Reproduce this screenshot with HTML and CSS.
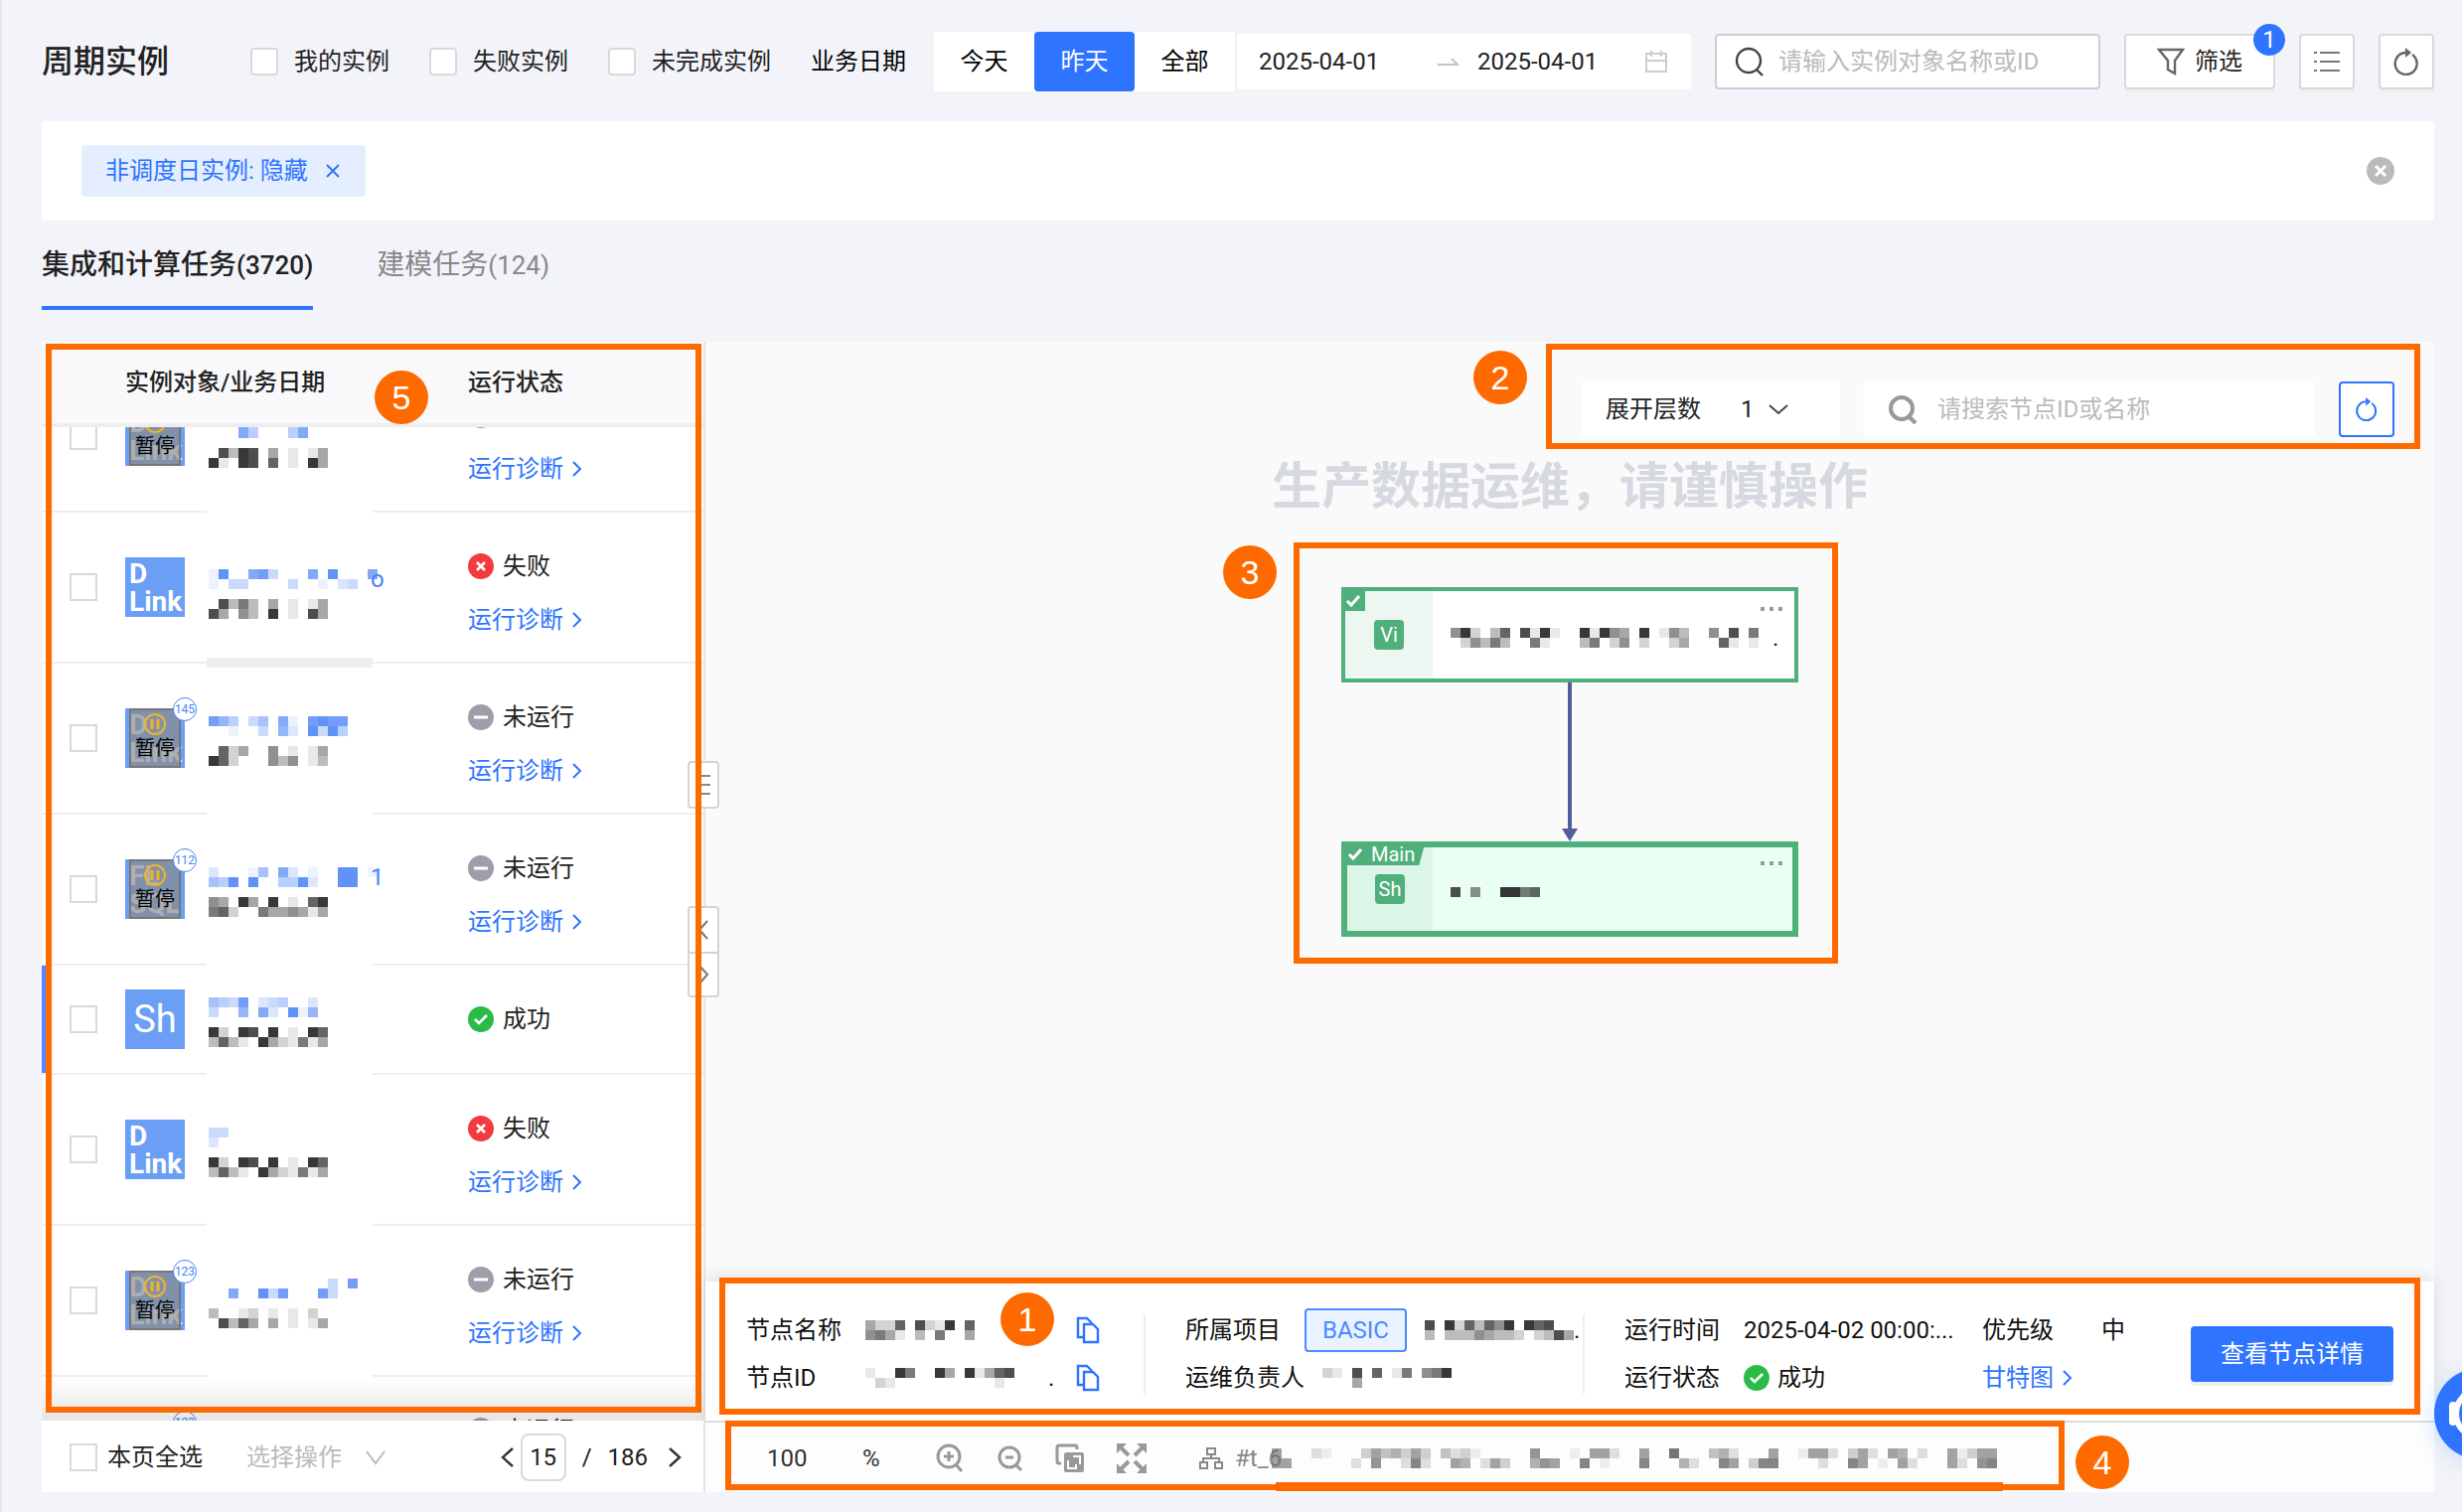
FILE: index.html
```html
<!DOCTYPE html>
<html lang="zh">
<head>
    <meta charset="UTF-8">
    <meta name="viewport" content="width=device-width, initial-scale=1.0">
    <title>周期实例</title>
    <link rel="stylesheet" href="styles.css">
</head>
<body>
    <!-- Shared icons -->
    <svg class="sprite" aria-hidden="true">
        <symbol id="i-fail" viewBox="0 0 26 26"><circle cx="13" cy="13" r="13" fill="#f33b3f"/><path d="M9 9l8 8M17 9l-8 8" stroke="#fff" stroke-width="2.6"/></symbol>
        <symbol id="i-wait" viewBox="0 0 26 26"><circle cx="13" cy="13" r="13" fill="#a19caa"/><path d="M6 13h14" stroke="#fff" stroke-width="3"/></symbol>
        <symbol id="i-ok" viewBox="0 0 26 26"><circle cx="13" cy="13" r="13" fill="#2cbb47"/><path d="M7 13l4 4 8-8" fill="none" stroke="#fff" stroke-width="2.6"/></symbol>
        <symbol id="i-right" viewBox="0 0 10 18"><path d="M1 2l7 7-7 7" fill="none" stroke="currentColor" stroke-width="2"/></symbol>
        <symbol id="i-refresh" viewBox="0 0 28 28"><path d="M20 6A11 11 0 1 1 13 4" transform="translate(0 1)" fill="none" stroke="currentColor" stroke-width="2.4"/><path d="M13 0l6 5-6 5z" fill="currentColor"/></symbol>
        <symbol id="i-copy" viewBox="0 0 24 28"><path d="M7 21H2V2h9l5 5" fill="none" stroke="currentColor" stroke-width="2.4"/><path d="M8 8h9l5 5v13H8z" fill="none" stroke="currentColor" stroke-width="2.4"/></symbol>
        <symbol id="i-pause" viewBox="0 0 24 24"><circle cx="12" cy="12" r="10" fill="none" stroke="#f0b429" stroke-width="2"/><path d="M9 7v10M15 7v10" stroke="#f0b429" stroke-width="3"/></symbol>
        <symbol id="i-check" viewBox="0 0 16 14"><path d="M2 7l4 4 8-9" fill="none" stroke="#fff" stroke-width="3"/></symbol>
        <symbol id="i-more" viewBox="0 0 22 4"><path d="M0 0h4v4H0zM9 0h4v4H9zM18 0h4v4h-4z" fill="#999"/></symbol>
    </svg>

    <header class="topbar">
        <h1>周期实例</h1>
        <div class="checks">
            <label><input type="checkbox">我的实例</label>
            <label><input type="checkbox">失败实例</label>
            <label><input type="checkbox">未完成实例</label>
            <span class="date-label">业务日期</span>
        </div>
        <div class="segment">
            <button>今天</button>
            <button class="on">昨天</button>
            <button>全部</button>
        </div>
        <div class="range">
            <input type="text" value="2025-04-01" aria-label="开始日期">
            <svg width="22" height="10" viewBox="0 0 22 10"><path d="M0 8h20l-6-6" fill="none" stroke="#c4c4c4" stroke-width="2"/></svg>
            <input type="text" value="2025-04-01" aria-label="结束日期">
            <svg width="24" height="24" viewBox="0 0 24 24" fill="none" stroke="#ccc" stroke-width="2"><path d="M2 4h20v18H2zM2 11h20M7 1v6M17 1v6"/></svg>
        </div>
        <div class="search">
            <svg width="30" height="30" viewBox="0 0 30 30" fill="none" stroke="#444" stroke-width="2.4"><circle cx="14" cy="14" r="12"/><path d="M22 23l6 6"/></svg>
            <input type="text" placeholder="请输入实例对象名称或ID" aria-label="搜索实例">
        </div>
        <button class="btn filter">
            <svg width="28" height="28" viewBox="0 0 28 28" fill="none" stroke="#666" stroke-width="2.4"><path d="M2 2h24l-8 11v13l-7-4v-9z"/></svg>
            筛选<span class="count">1</span>
        </button>
        <button class="btn icon" aria-label="列表">
            <svg width="26" height="22" viewBox="0 0 26 22" stroke="#777" stroke-width="2"><path d="M6 2h20M6 11h20M6 20h20M0 2h3M0 11h3M0 20h3"/></svg>
        </button>
        <button class="btn icon" aria-label="刷新"><svg width="28" height="28"><use href="#i-refresh"/></svg></button>
    </header>

    <section class="conditions">
        <span class="tag">非调度日实例: 隐藏
            <svg width="14" height="16" viewBox="0 0 14 16" stroke="currentColor" stroke-width="2"><path d="M1 2l12 12M13 2L1 14"/></svg>
        </span>
        <svg width="28" height="28" viewBox="0 0 28 28"><circle cx="14" cy="14" r="14" fill="#bbb"/><path d="M9 9l10 10M19 9L9 19" stroke="#fff" stroke-width="3"/></svg>
    </section>

    <nav class="tabs">
        <a href="#" class="on">集成和计算任务<span>(3720)</span></a>
        <a href="#">建模任务<span>(124)</span></a>
    </nav>

    <main class="workspace">
        <aside class="instances">
            <div class="list">
                <table>
                    <colgroup>
                        <col class="c-check">
                        <col class="c-type">
                        <col class="c-name">
                        <col>
                    </colgroup>
                    <thead>
                        <tr><th></th><th colspan="2">实例对象/业务日期</th><th class="status">运行状态</th></tr>
                    </thead>
                    <tbody>
                        <tr class="cut">
                            <td><div class="cell check"><input type="checkbox" aria-label="选择"></div></td>
                            <td><div class="cell"><div class="type two">D<br>Link<span class="pause"><svg width="24" height="24"><use href="#i-pause"/></svg>暂停</span></div></div></td>
                            <td class="name"><div class="cell"><i class="mosaic blue" data-rows="...74...47|...74...47"></i><i class="mosaic" data-rows=".8398.4.1.14|91.98.7.1.94"></i></div></td>
                            <td class="status"><div class="cell"><span><svg width="26" height="26"><use href="#i-wait"/></svg>未运行</span><a href="#">运行诊断<svg width="10" height="18"><use href="#i-right"/></svg></a></div></td>
                        </tr>
                        <tr class="smudged">
                            <td><div class="cell check"><input type="checkbox" aria-label="选择"></div></td>
                            <td><div class="cell"><div class="type two">D<br>Link</div></div></td>
                            <td class="name"><div class="cell"><span class="tail"><i class="mosaic blue" data-rows="19..783...7.9...7|1.33....3..1.23"></i>o</span><i class="mosaic" data-rows=".8363.4.1.14|84.53.9.1.84"></i></div></td>
                            <td class="status"><div class="cell"><span><svg width="26" height="26"><use href="#i-fail"/></svg>失败</span><a href="#">运行诊断<svg width="10" height="18"><use href="#i-right"/></svg></a></div></td>
                        </tr>
                        <tr>
                            <td><div class="cell check"><input type="checkbox" aria-label="选择"></div></td>
                            <td><div class="cell"><div class="type two">D<br>Link<span class="pause"><svg width="24" height="24"><use href="#i-pause"/></svg>暂停</span><b class="num">145</b></div></div></td>
                            <td class="name"><div class="cell"><i class="mosaic blue" data-rows="864.35.71.8988|..1..3.62.9394"></i><i class="mosaic" data-rows=".724..5.1.14|972...535.13"></i></div></td>
                            <td class="status"><div class="cell"><span><svg width="26" height="26"><use href="#i-wait"/></svg>未运行</span><a href="#">运行诊断<svg width="10" height="18"><use href="#i-right"/></svg></a></div></td>
                        </tr>
                        <tr>
                            <td><div class="cell check"><input type="checkbox" aria-label="选择"></div></td>
                            <td><div class="cell"><div class="type two">FL<br>SQL<span class="pause"><svg width="24" height="24"><use href="#i-pause"/></svg>暂停</span><b class="num">112</b></div></div></td>
                            <td class="name"><div class="cell"><span class="tail"><i class="mosaic blue" data-rows="2...15.72.1..99.1|549.9..4492..99"></i>1</span><i class="mosaic" data-rows="54.94.9.1.79|672..6445414"></i></div></td>
                            <td class="status"><div class="cell"><span><svg width="26" height="26"><use href="#i-wait"/></svg>未运行</span><a href="#">运行诊断<svg width="10" height="18"><use href="#i-right"/></svg></a></div></td>
                        </tr>
                        <tr class="short">
                            <td><div class="cell check"><input type="checkbox" aria-label="选择"></div></td>
                            <td><div class="cell"><div class="type">Sh</div></div></td>
                            <td class="name"><div class="cell"><i class="mosaic blue" data-rows="5438.234..2|3..6.72.916"></i><i class="mosaic" data-rows="92.98.9.1.97|3731.9421614"></i></div></td>
                            <td class="status"><div class="cell"><span><svg width="26" height="26"><use href="#i-ok"/></svg>成功</span></div></td>
                        </tr>
                        <tr>
                            <td><div class="cell check"><input type="checkbox" aria-label="选择"></div></td>
                            <td><div class="cell"><div class="type two">D<br>Link</div></div></td>
                            <td class="name"><div class="cell"><i class="mosaic blue" data-rows="33|2"></i><i class="mosaic" data-rows="92.98.9.1.97|3731.9421614"></i></div></td>
                            <td class="status"><div class="cell"><span><svg width="26" height="26"><use href="#i-fail"/></svg>失败</span><a href="#">运行诊断<svg width="10" height="18"><use href="#i-right"/></svg></a></div></td>
                        </tr>
                        <tr>
                            <td><div class="cell check"><input type="checkbox" aria-label="选择"></div></td>
                            <td><div class="cell"><div class="type two">D<br>Link<span class="pause"><svg width="24" height="24"><use href="#i-pause"/></svg>暂停</span><b class="num">123</b></div></div></td>
                            <td class="name"><div class="cell"><i class="mosaic blue" data-rows="............3.8|..7..938...83"></i><i class="mosaic" data-rows="3..12.1.1.2|.8374.4.1.14"></i></div></td>
                            <td class="status"><div class="cell"><span><svg width="26" height="26"><use href="#i-wait"/></svg>未运行</span><a href="#">运行诊断<svg width="10" height="18"><use href="#i-right"/></svg></a></div></td>
                        </tr>
                        <tr>
                            <td><div class="cell check"><input type="checkbox" aria-label="选择"></div></td>
                            <td><div class="cell"><div class="type two">D<br>Link<span class="pause"><svg width="24" height="24"><use href="#i-pause"/></svg>暂停</span><b class="num">123</b></div></div></td>
                            <td class="name"></td>
                            <td class="status"><div class="cell"><span><svg width="26" height="26"><use href="#i-wait"/></svg>未运行</span><a href="#">运行诊断<svg width="10" height="18"><use href="#i-right"/></svg></a></div></td>
                        </tr>
                    </tbody>
                </table>
                <div class="fade"></div>
            </div>
            <footer class="pager">
                <label><input type="checkbox">本页全选</label>
                <button class="ops" disabled>选择操作<svg width="20" height="16" viewBox="0 0 20 16" fill="none" stroke="#bbb" stroke-width="2"><path d="M1 2l9 12 9-12"/></svg></button>
                <div class="pages">
                    <button aria-label="上一页"><svg width="14" height="22" viewBox="0 0 14 22" fill="none" stroke="#333" stroke-width="2.4"><path d="M12 2L2 11l10 9"/></svg></button>
                    <input type="text" value="15" aria-label="页码">
                    <span>/</span>
                    <span>186</span>
                    <button aria-label="下一页"><svg width="14" height="22" viewBox="0 0 14 22" fill="none" stroke="#333" stroke-width="2.4"><path d="M2 2l10 9-10 9"/></svg></button>
                </div>
            </footer>
            <button class="handle menu" aria-label="菜单"><svg width="14" height="20" viewBox="0 0 14 20" stroke="#888" stroke-width="2"><path d="M0 1h14M0 10h14M0 19h14"/></svg></button>
            <div class="handle pair">
                <button aria-label="收起"><svg width="12" height="20" viewBox="0 0 12 20" fill="none" stroke="#777" stroke-width="2"><path d="M10 1L2 10l8 9"/></svg></button>
                <button aria-label="展开"><svg width="12" height="20" viewBox="0 0 12 20" fill="none" stroke="#777" stroke-width="2"><path d="M2 1l8 9-8 9"/></svg></button>
            </div>
            <div class="mark mark-list"></div>
            <span class="dot dot-list">5</span>
        </aside>

        <section class="canvas">
            <div class="tools">
                <label class="depth">展开层数
                    <select><option>1</option></select>
                    <svg width="20" height="12" viewBox="0 0 20 12" fill="none" stroke="#444" stroke-width="2"><path d="M1 2l9 8 9-8"/></svg>
                </label>
                <div class="find">
                    <svg width="30" height="30" viewBox="0 0 30 30" fill="none" stroke="#999" stroke-width="4"><circle cx="14" cy="14" r="11"/><path d="M21 22l7 7"/></svg>
                    <input type="text" placeholder="请搜索节点ID或名称" aria-label="搜索节点">
                </div>
                <button class="reload" aria-label="刷新"><svg width="24" height="24"><use href="#i-refresh"/></svg></button>
                <div class="mark mark-tools"></div>
                <span class="dot dot-tools">2</span>
            </div>

            <p class="watermark">生产数据运维，请谨慎操作</p>

            <div class="flow">
                <div class="node">
                    <span class="flag"><svg width="16" height="14"><use href="#i-check"/></svg></span>
                    <div class="kind"><b>Vi</b></div>
                    <div class="title"><i class="mosaic" data-rows="592.37.8191..91954.9.153..5.8.6|.25363..61...36.25.2..24...71.1"></i>.</div>
                    <svg class="more" width="22" height="4"><use href="#i-more"/></svg>
                </div>
                <svg class="arrow" width="16" height="160" viewBox="0 0 16 160"><path d="M8 0v150" stroke="#51609c" stroke-width="4"/><path d="M0 147h16l-8 13z" fill="#51609c"/></svg>
                <div class="node main">
                    <span class="flag"><svg width="16" height="14"><use href="#i-check"/></svg>Main</span>
                    <div class="kind"><b>Sh</b></div>
                    <div class="title"><i class="mosaic" data-rows="8.5..9967"></i></div>
                    <svg class="more" width="22" height="4"><use href="#i-more"/></svg>
                </div>
                <div class="mark mark-flow"></div>
                <span class="dot dot-flow">3</span>
            </div>

            <div class="info">
                <div class="group">
                    <div class="row"><span class="key">节点名称</span><i class="mosaic" data-rows="4227.8219.7|5641.3.6..4"></i><button class="copy" aria-label="复制名称"><svg width="24" height="28"><use href="#i-copy"/></svg></button></div>
                    <div class="row"><span class="key">节点ID</span><i class="mosaic" data-rows="1..96..94.91478|.21..........1"></i><span class="end">.</span><button class="copy" aria-label="复制ID"><svg width="24" height="28"><use href="#i-copy"/></svg></button></div>
                </div>
                <div class="group">
                    <div class="row"><span class="key">所属项目</span><span class="basic">BASIC</span><i class="mosaic" data-rows="8.9273759.978|3.33354332.2384"></i>.</div>
                    <div class="row"><span class="key wide">运维负责人</span><i class="mosaic" data-rows="21.8.7.16.569|...4"></i></div>
                </div>
                <div class="group">
                    <div class="row"><span class="key">运行时间</span><span class="val">2025-04-02 00:00:...</span><span class="key">优先级</span><span>中</span></div>
                    <div class="row"><span class="key">运行状态</span><span class="val ok"><svg width="26" height="26"><use href="#i-ok"/></svg>成功</span><a href="#">甘特图<svg width="10" height="18"><use href="#i-right"/></svg></a></div>
                </div>
                <button class="primary">查看节点详情</button>
                <div class="mark mark-info"></div>
                <span class="dot dot-info">1</span>
            </div>

            <div class="zoombar">
                <span class="pct"><input type="text" value="100" aria-label="缩放比例">%</span>
                <div class="zooms">
                    <svg width="28" height="30" viewBox="0 0 28 30" fill="none" stroke="#999" stroke-width="3"><circle cx="13" cy="13" r="11"/><path d="M20 21l6 7M13 8v10M8 13h10"/></svg>
                    <svg width="28" height="30" viewBox="0 0 28 30" fill="none" stroke="#999" stroke-width="3"><circle cx="14" cy="14" r="10"/><path d="M20 21l6 6M10 14h8"/></svg>
                    <svg width="30" height="30" viewBox="0 0 30 30"><path d="M6 20H4q-2 0-2-2V4q0-2 2-2h16q2 0 2 2v2" fill="none" stroke="#999" stroke-width="3"/><rect x="9" y="9" width="20" height="20" rx="2" fill="#999"/><path d="M13 17v8h8v-4M18 13h7v8" fill="none" stroke="#fff" stroke-width="2"/></svg>
                    <svg width="30" height="30" viewBox="0 0 30 30"><path d="M3 3l9 9M27 3l-9 9M3 27l9-9M27 27l-9-9" stroke="#999" stroke-width="4"/><path d="M0 0h10L0 10zM30 0H20l10 10zM0 30h10L0 20zM30 30H20l10-10z" fill="#999"/></svg>
                </div>
                <svg width="24" height="22" viewBox="0 0 24 22" fill="none" stroke="#888" stroke-width="2"><path d="M8 1h8v6H8zM1 15h7v6H1zM16 15h7v6h-7zM12 7v4M4 15v-4h16v4"/></svg>
                <span class="task">#t_6</span>
                <i class="mosaic gray" data-rows="6...21...3645363.4231.....7...1.662..6..9...452...6..1662.362.65.2..61366|66......2.7..282..65.263..576..8.1...8...52..86.388....2..86.1.62...62.78"></i>
                <div class="mark mark-zoom"></div>
                <span class="dot dot-zoom">4</span>
            </div>
        </section>
    </main>

    <button class="chat" aria-label="客服">
        <svg width="92" height="92" viewBox="0 0 92 92" fill="none" stroke="#fff"><circle cx="46" cy="46" r="24" stroke-width="6"/><path d="M19 38v16" stroke-width="8" stroke-linecap="round"/></svg>
    </button>

    <script src="script.js"></script>
</body>
</html>
```
FILE: styles.css
```css
* {
    margin: 0;
    padding: 0;
    box-sizing: border-box;
}

body {
    display: flex;
    flex-direction: column;
    min-height: 100vh;
    padding: 32px 28px 20px 40px;
    border-left: 2px solid #e6e7ea;
    background-color: #f3f4f9;
    font-family: Roboto, "Noto Sans CJK SC", sans-serif;
    font-size: 24px;
    line-height: 36px;
    color: #222;
    overflow: hidden;
    position: relative;
}

button, input, select {
    font: inherit;
    color: inherit;
    border: none;
    background: none;
    outline: none;
}

button {
    cursor: pointer;
}

a {
    color: #2e74ff;
    text-decoration: none;
}

svg {
    flex-shrink: 0;
}

input::placeholder {
    color: #bbb;
    opacity: 1;
}

input[type="checkbox"] {
    appearance: none;
    flex-shrink: 0;
    width: 28px;
    height: 28px;
    border: 2px solid #d9d9d9;
    background-color: #fff;
}

.sprite {
    position: absolute;
    width: 0;
    height: 0;
}

/* 顶部栏 */
.topbar {
    display: flex;
    align-items: center;
    height: 60px;
    white-space: nowrap;
}

.topbar h1 {
    font-size: 32px;
    font-weight: 500;
    margin-right: 82px;
}

.checks {
    display: flex;
    gap: 40px;
    margin-right: 28px;
}

.checks label {
    display: flex;
    align-items: center;
    gap: 16px;
}

.checks input[type="checkbox"] {
    border-radius: 4px;
}

.date-label {
    color: #000;
}

.segment {
    display: flex;
    background-color: #fff;
    color: #000;
}

.segment button {
    width: 101px;
    height: 60px;
}

.segment .on {
    background-color: #2e74ff;
    color: #fff;
    border-radius: 4px;
}

.range {
    display: flex;
    align-items: center;
    width: 459px;
    height: 56px;
    margin-right: 24px;
    padding: 0 24px 0 22px;
    border-left: 2px solid #f0f0f3;
    background-color: #fff;
}

.range input {
    width: 180px;
}

.range input + svg {
    margin-right: 18px;
}

.range input:last-of-type {
    width: 168px;
}

.range svg:last-child {
    margin: 0;
}

.search {
    display: flex;
    align-items: center;
    gap: 14px;
    flex: 1;
    height: 56px;
    margin-right: 24px;
    padding: 0 18px;
    border: 2px solid #cdced3;
    border-radius: 4px;
    background-color: #fff;
}

.search input {
    width: 100%;
}

.btn {
    position: relative;
    display: flex;
    align-items: center;
    justify-content: center;
    height: 56px;
    border: 2px solid #d9d9dc;
    border-radius: 4px;
    background-color: #fff;
    box-shadow: 0 4px 0 #eeeff3;
    color: #666;
}

.filter {
    width: 152px;
    gap: 10px;
    padding-left: 10px;
    color: #222;
}

.icon {
    width: 56px;
    margin-left: 24px;
}

.count {
    position: absolute;
    top: -12px;
    right: -12px;
    width: 32px;
    height: 32px;
    border-radius: 50%;
    background-color: #2e74ff;
    color: #fff;
    line-height: 32px;
}

/* 筛选条件 */
.conditions {
    display: flex;
    align-items: center;
    justify-content: space-between;
    height: 100px;
    margin-top: 30px;
    padding: 0 40px;
    border-radius: 4px;
    background-color: #fff;
}

.tag {
    display: flex;
    align-items: center;
    gap: 18px;
    height: 52px;
    padding: 0 26px 0 24px;
    border-radius: 4px;
    background-color: #e5eeff;
    color: #2e74ff;
}

.tabs {
    display: flex;
    gap: 64px;
    margin-bottom: 32px;
    font-size: 28px;
    line-height: 90px;
}

.tabs a {
    color: #888;
}

.tabs span {
    font-size: 26px;
}

.tabs .on {
    color: #222;
    font-weight: 500;
    box-shadow: inset 0 -4px 0 #2e74ff;
}

/* 工作区 */
.workspace {
    display: flex;
    flex: 1;
}

.instances {
    position: relative;
    z-index: 2;
    display: flex;
    flex-direction: column;
    flex-shrink: 0;
    width: 668px;
    border-right: 2px solid #e4e4e6;
    background-color: #fff;
}

.list {
    position: relative;
    z-index: 0;
    flex: 1 1 0;
    overflow: hidden;
}

.list table {
    width: 100%;
    table-layout: fixed;
    border-collapse: separate;
    border-spacing: 0;
}

.c-check {
    width: 84px;
}

.c-type {
    width: 82px;
}

.c-name {
    width: 167px;
}

th {
    position: relative;
    z-index: 1;
    height: 86px;
    border-bottom: 4px solid #eee;
    background-color: #f9f9fb;
    font-weight: 500;
    text-align: left;
}

td {
    border-bottom: 2px solid #eee;
}

td.name {
    border-bottom-color: #fff;
    padding-left: 2px;
}

.status {
    padding-left: 96px;
}

.cell {
    display: flex;
    flex-direction: column;
    justify-content: center;
    gap: 10px;
    height: 150px;
}

.check {
    padding-left: 28px;
}

.name .cell {
    padding-top: 6px;
}

.cut .name .cell,
.smudged .name .cell {
    padding-top: 14px;
}

.status .cell {
    gap: 18px;
    padding-top: 12px;
}

.cut .cell {
    margin-top: -66px;
}

.short .cell {
    height: 108px;
}

.short .status .cell {
    padding-top: 0;
}

.short td:first-child {
    box-shadow: inset 4px 0 0 #5585ff;
}

.smudged .name {
    box-shadow: inset 0 -4px 0 #eee, 0 4px 0 #eee;
    border-bottom-color: #eee;
}

.status span,
.status a,
.row a {
    display: flex;
    align-items: center;
    gap: 9px;
}

.type {
    position: relative;
    width: 60px;
    height: 60px;
    background-color: #6a9ff5;
    color: #fff;
    font-size: 38px;
    line-height: 60px;
    text-align: center;
}

.type.two {
    padding: 3px 4px;
    font-size: 28px;
    font-weight: 700;
    line-height: 28px;
    text-align: left;
}

.pause {
    position: absolute;
    inset: 0 4px;
    display: flex;
    flex-direction: column;
    align-items: center;
    padding-top: 2px;
    border: 2px solid #777;
    background-color: rgba(140, 140, 140, .7);
    color: #000;
    font-size: 20px;
    font-weight: 400;
    line-height: 24px;
}

.num {
    position: absolute;
    top: -11px;
    right: -12px;
    width: 24px;
    height: 24px;
    border: 1px solid #4886f5;
    border-radius: 50%;
    background-color: #fff;
    color: #4886f5;
    font-size: 12px;
    font-weight: 400;
    line-height: 22px;
    text-align: center;
}

/* 打码块 */
.mosaic {
    display: block;
    flex-shrink: 0;
    color: #222;
}

.mosaic svg {
    display: block;
}

.mosaic.blue {
    color: #4f86f7;
}

.mosaic.gray {
    color: #666;
}

.tail {
    display: flex;
    height: 20px;
    line-height: 20px;
    color: #4886f5;
}

.tail .mosaic {
    width: 163px;
}

.fade {
    position: absolute;
    left: 0;
    right: 0;
    bottom: 0;
    height: 44px;
    background: linear-gradient(rgba(0, 0, 0, 0), rgba(0, 0, 0, .1));
}

.pager {
    display: flex;
    align-items: center;
    height: 72px;
    padding: 2px 22px 0 28px;
    white-space: nowrap;
}

.pager label {
    display: flex;
    align-items: center;
    gap: 10px;
}

.ops {
    display: flex;
    align-items: center;
    gap: 24px;
    margin-left: 44px;
    color: #bbb;
}

.pages {
    display: flex;
    align-items: center;
    gap: 16px;
    margin-left: auto;
}

.pages button {
    display: flex;
}

.pages button:first-child {
    margin-right: -10px;
}

.pages input {
    width: 46px;
    height: 48px;
    border: 2px solid #d9d9d9;
    border-radius: 8px;
    text-align: center;
}

.pages button:last-child {
    margin-left: 4px;
}

.handle {
    position: absolute;
    right: -16px;
    width: 32px;
    border: 2px solid #d4d4d4;
    border-radius: 4px;
    background-color: #fff;
}

.menu {
    top: 422px;
    height: 48px;
    display: flex;
    align-items: center;
    justify-content: center;
}

.pair {
    top: 568px;
}

.pair button {
    display: flex;
    align-items: center;
    justify-content: center;
    width: 28px;
    height: 44px;
}

.pair button + button {
    border-top: 2px solid #d4d4d4;
}

/* 画布 */
.canvas {
    display: flex;
    flex-direction: column;
    flex: 1;
    min-width: 0;
    background-color: #fafafa;
}

.tools {
    position: relative;
    display: flex;
    gap: 24px;
    align-self: flex-end;
    margin: 40px 40px 0 0;
}

.depth {
    display: flex;
    align-items: center;
    width: 260px;
    height: 56px;
    padding-left: 24px;
    background-color: #fff;
}

.depth select {
    appearance: none;
    width: 28px;
    margin-left: 40px;
}

.find {
    display: flex;
    align-items: center;
    gap: 20px;
    width: 454px;
    padding: 0 24px;
    border-radius: 4px;
    background-color: #fff;
}

.find input {
    width: 100%;
}

.reload {
    display: flex;
    align-items: center;
    justify-content: center;
    width: 56px;
    border: 2px solid #2e74ff;
    border-radius: 4px;
    background-color: #fff;
    color: #2e74ff;
}

.watermark {
    margin-top: 20px;
    color: #d6d9e0;
    font-size: 50px;
    font-weight: 700;
    line-height: 60px;
    text-align: center;
}

.flow {
    position: relative;
    display: flex;
    flex-direction: column;
    align-items: center;
    align-self: center;
    margin: 71px 0 auto;
}

.node {
    position: relative;
    display: flex;
    width: 460px;
    height: 96px;
    border: 4px solid #50b07b;
    background-color: #fff;
}

.kind {
    display: flex;
    align-items: center;
    justify-content: center;
    width: 88px;
    background-color: #edf6f1;
}

.kind b {
    width: 30px;
    height: 30px;
    border-radius: 4px;
    background-color: #50b07b;
    color: #fff;
    font-size: 20px;
    font-weight: 400;
    line-height: 30px;
    text-align: center;
}

.title {
    display: flex;
    align-items: center;
    padding: 6px 0 0 18px;
}

.title .mosaic {
    margin-right: 14px;
}

.flag {
    position: absolute;
    top: 0;
    left: 0;
    display: flex;
    align-items: center;
    gap: 8px;
    height: 20px;
    padding-right: 4px;
    background-color: #50b07b;
    color: #fff;
    font-size: 20px;
    line-height: 20px;
}

.main {
    border-width: 6px;
    background-color: #eafff3;
}

.main .kind {
    width: 86px;
    background-color: #dbf6e6;
}

.main .flag {
    top: -4px;
    height: 22px;
    padding-right: 10px;
    clip-path: polygon(0 0, 100% 0, calc(100% - 6px) 100%, 0 100%);
}

.more {
    position: absolute;
    top: 16px;
    right: 12px;
}

.main .more {
    top: 14px;
    right: 10px;
}

.arrow {
    display: block;
}

/* 节点信息 */
.info {
    position: relative;
    z-index: 3;
    display: flex;
    align-items: center;
    height: 142px;
    padding: 6px 41px 0;
    border-bottom: 2px solid #dcdcdc;
    background-color: #fff;
    box-shadow: 0 -4px 16px rgba(0, 0, 0, .1);
    color: #111;
    white-space: nowrap;
}

.group {
    flex: 0 0 400px;
    height: 80px;
    display: flex;
    flex-direction: column;
    justify-content: center;
}

.group + .group {
    flex-basis: 442px;
    padding-left: 40px;
    border-left: 2px solid #eee;
}

.group:nth-child(3) {
    flex: 1;
}

.row {
    display: flex;
    align-items: center;
    flex-shrink: 0;
    height: 48px;
}

.key {
    width: 120px;
}

.key.wide {
    width: 138px;
}

.val {
    width: 240px;
}

.ok {
    display: flex;
    align-items: center;
    gap: 8px;
}

.end {
    margin-left: 34px;
}

.copy {
    display: flex;
    margin-left: auto;
    margin-right: 44px;
    color: #2e74ff;
}

.basic {
    width: 103px;
    height: 44px;
    margin-right: 18px;
    border: 2px solid #4a8bff;
    border-radius: 4px;
    background-color: #ebf2ff;
    color: #4a8bff;
    line-height: 40px;
    text-align: center;
}

.primary {
    width: 204px;
    height: 56px;
    border-radius: 4px;
    background-color: #2e74ff;
    color: #fff;
    box-shadow: 0 4px 0 #f0f0f0;
}

.zoombar {
    position: relative;
    z-index: 3;
    display: flex;
    align-items: center;
    height: 70px;
    padding: 2px 0 0 62px;
    background-color: #fdfdfd;
}

.pct {
    width: 170px;
    color: #333;
}

.pct input {
    width: 96px;
}

.zooms {
    display: flex;
    gap: 32px;
    width: 265px;
}

.task {
    margin: 0 -10px 0 12px;
    color: #888;
}

/* 标注 */
.mark {
    position: absolute;
    border: 6px solid #ff6a00;
    pointer-events: none;
}

.dot {
    position: absolute;
    width: 54px;
    height: 54px;
    border-radius: 50%;
    background-color: #ff6a00;
    color: #fff;
    font-family: "Liberation Sans", sans-serif;
    font-size: 34px;
    line-height: 54px;
    text-align: center;
}

.mark-list {
    inset: 2px 2px 80px 4px;
}

.dot-list {
    top: 29px;
    left: 335px;
}

.mark-tools {
    inset: -38px -26px -12px -36px;
}

.dot-tools {
    top: -31px;
    left: -109px;
}

.mark-flow {
    inset: -45px -40px -27px -48px;
}

.dot-flow {
    top: -42px;
    left: -119px;
}

.mark-info {
    inset: -4px 14px 6px 14px;
}

.dot-info {
    top: 11px;
    left: 297px;
}

.mark-zoom {
    top: -2px;
    left: 20px;
    width: 1348px;
    height: 70px;
}

.mark-zoom::after {
    content: "";
    position: absolute;
    left: 548px;
    bottom: -7px;
    width: 732px;
    height: 9px;
    background-color: #ff6a00;
}

.dot-zoom {
    top: 13px;
    left: 1379px;
}

.chat {
    position: absolute;
    z-index: 4;
    right: -64px;
    bottom: 53px;
    width: 92px;
    height: 92px;
    border-radius: 50%;
    background-color: #2e74ff;
    box-shadow: 0 4px 24px rgba(46, 116, 255, .2);
}
```
FILE: script.js
```js
// 每个字符是一个 10px 方块，数字越大颜色越深
document.querySelectorAll('.mosaic').forEach((el) => {
    const rows = el.dataset.rows.split('|');
    const cols = Math.max(...rows.map((row) => row.length));
    let rects = '';
    rows.forEach((row, y) => {
        [...row].forEach((level, x) => {
            if (level === '.') return;
            rects += `<rect x="${x * 10}" y="${y * 10}" width="10" height="10" fill="currentColor" fill-opacity="${level / 10}"/>`;
        });
    });
    el.innerHTML = `<svg width="${cols * 10}" height="${rows.length * 10}" shape-rendering="crispEdges">${rects}</svg>`;
});
```
